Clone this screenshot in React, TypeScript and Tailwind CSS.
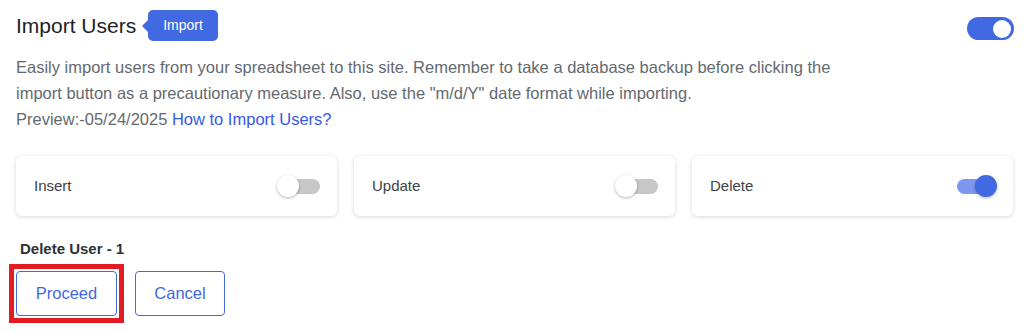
import React, { useState } from 'react';

const font = { fontFamily: '"Liberation Sans", Arial, sans-serif' };

function SmallToggle({ on, onChange }: { on: boolean; onChange: () => void }) {
  return (
    <button
      type="button"
      onClick={onChange}
      className={`relative w-[39px] h-[15px] rounded-full ${on ? 'bg-[#7d96ee]' : 'bg-[#c7c7c7]'}`}
    >
      <span
        className={`absolute top-1/2 -translate-y-1/2 w-[22px] h-[22px] rounded-full shadow-[0_1px_3px_rgba(0,0,0,0.3)] ${
          on ? 'right-[-1px] bg-[#4169e1]' : 'left-[-4px] bg-white'
        }`}
      />
    </button>
  );
}

export default function App() {
  const [enabled, setEnabled] = useState(true);
  const [opts, setOpts] = useState({ Insert: false, Update: false, Delete: true });

  return (
    <div className="w-[1024px] h-[331px] bg-white pl-4 pr-[11px] pt-[10px] overflow-hidden" style={font}>
      <div className="flex items-start justify-between">
        <div className="flex items-center h-[31px]">
          <h1 className="text-[21px] text-[#1d2327] leading-none">Import Users</h1>
          <div className="relative ml-[12px] h-[31px] px-[15px] flex items-center rounded-[5px] bg-[#4169e1] text-white text-[14px]">
            <span className="absolute left-[-6px] top-1/2 -translate-y-1/2 w-0 h-0 border-y-[6px] border-y-transparent border-r-[6px] border-r-[#4169e1]" />
            Import
          </div>
        </div>
        <button
          type="button"
          onClick={() => setEnabled(!enabled)}
          className={`mt-[7px] mr-[-1px] w-[47px] h-[23px] rounded-full flex items-center px-[3px] ${
            enabled ? 'bg-[#4169e1] justify-end' : 'bg-[#c7c7c7] justify-start'
          }`}
        >
          <span className="w-[18px] h-[18px] rounded-full bg-white" />
        </button>
      </div>

      <p className="mt-[13px] max-w-[850px] text-[16.5px] leading-[26px] text-[#646970]">
        Easily import users from your spreadsheet to this site. Remember to take a database backup before clicking the
        import button as a precautionary measure. Also, use the "m/d/Y" date format while importing.
        <br />
        Preview:-05/24/2025 <a href="#" className="text-[#3858e9]">How to Import Users?</a>
      </p>

      <div className="mt-[24px] grid grid-cols-3 gap-[17px]">
        {(['Insert', 'Update', 'Delete'] as const).map((k) => (
          <div
            key={k}
            className="h-[60px] rounded-[6px] bg-white shadow-[0_1px_4px_rgba(0,0,0,0.16)] flex items-center justify-between pl-[18px] pr-[17px]"
          >
            <span className="text-[15px] text-[#3c434a]">{k}</span>
            <SmallToggle on={opts[k]} onChange={() => setOpts({ ...opts, [k]: !opts[k] })} />
          </div>
        ))}
      </div>

      <div className="mt-[24px] ml-1 text-[15px] leading-[18px] font-bold text-[#2c3338]">Delete User - 1</div>

      <div className="mt-[6px] flex items-center gap-[11px] -ml-[7px]">
        <div className="border-[5px] border-[#e31b23] p-[2px]">
          <button
            type="button"
            className="w-[101px] h-[45px] rounded-[4px] border border-[#4169e1] text-[16.5px] text-[#4169e1] bg-white"
          >
            Proceed
          </button>
        </div>
        <button
          type="button"
          className="w-[90px] h-[45px] rounded-[4px] border border-[#4169e1] text-[16.5px] text-[#4169e1] bg-white"
        >
          Cancel
        </button>
      </div>
    </div>
  );
}
